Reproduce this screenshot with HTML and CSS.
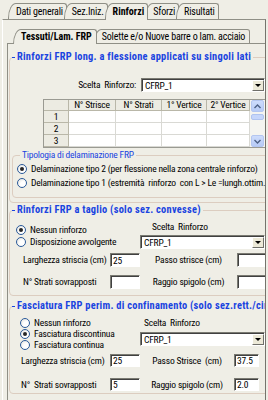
FILE: index.html
```html
<!DOCTYPE html>
<html lang="it">
<head>
  <meta charset="UTF-8">
  <title>Rinforzi</title>
  <link rel="stylesheet" href="styles.css">
</head>
<body>
  <div class="window">
    <div class="tabs outer-tabs">
      <span class="tab">Dati generali</span>
      <span class="tab">Sez.Iniz.</span>
      <span class="tab active">Rinforzi</span>
      <span class="tab">Sforzi</span>
      <span class="tab">Risultati</span>
    </div>

    <div class="outer-page">
      <div class="tabs inner-tabs">
        <span class="tab active">Tessuti/Lam. FRP</span>
        <span class="tab">Solette e/o Nuove barre o lam. acciaio</span>
      </div>

      <div class="inner-page">
        <!-- flessione -->
        <fieldset class="group group-long">
          <legend>Rinforzi FRP long. a flessione applicati su singoli lati</legend>
          <div class="choice-row">
            <span class="choice-label">Scelta&nbsp; Rinforzo:</span>
            <div class="combo combo-long"><span>CFRP_1</span><b class="drop"></b></div>
          </div>

          <div class="grid-wrap">
            <table class="grid">
              <colgroup>
                <col style="width:25px"><col style="width:47px"><col style="width:46px"><col style="width:45px"><col style="width:43px">
              </colgroup>
              <tr><th></th><th>N° Strisce</th><th>N° Strati</th><th>1° Vertice</th><th>2° Vertice</th></tr>
              <tr><th>1</th><td></td><td></td><td></td><td></td></tr>
              <tr><th>2</th><td></td><td></td><td></td><td></td></tr>
              <tr><th>3</th><td></td><td></td><td></td><td></td></tr>
            </table>
            <div class="vscroll">
              <span class="sb-btn"><svg width="7" height="5" viewBox="0 0 7 5"><path d="M0.5 4 L3.5 1 L6.5 4" fill="none" stroke="#4d6185" stroke-width="1.4"/></svg></span>
              <span class="sb-track"><span class="sb-thumb"></span></span>
              <span class="sb-btn"><svg width="7" height="5" viewBox="0 0 7 5"><path d="M0.5 1 L3.5 4 L6.5 1" fill="none" stroke="#4d6185" stroke-width="1.4"/></svg></span>
            </div>
          </div>

          <fieldset class="subgroup">
            <legend>Tipologia di delaminazione FRP</legend>
            <label class="radio"><span class="dot on"></span>Delaminazione tipo 2 (per flessione nella zona centrale rinforzo)</label>
            <label class="radio"><span class="dot"></span>Delaminazione tipo 1 (estremità&nbsp; rinforzo&nbsp; con L &gt; Le =lungh.ottim.</label>
          </fieldset>
        </fieldset>

        <!-- taglio -->
        <fieldset class="group group-shear">
          <legend>Rinforzi FRP a taglio (solo sez. convesse)</legend>
          <div class="top-part">
            <div class="radio-col">
              <label class="radio"><span class="dot on"></span>Nessun rinforzo</label>
              <label class="radio"><span class="dot"></span>Disposizione avvolgente</label>
            </div>
            <div class="choice-col">
              <span class="choice-title">Scelta&nbsp; Rinforzo</span>
              <div class="combo"><span>CFRP_1</span><b class="drop"></b></div>
            </div>
          </div>
          <div class="params">
            <span class="p-label">Larghezza striscia (cm)</span>
            <input class="field" value="25">
            <span class="p-label-mid">Passo strisce (cm)</span>
            <input class="field" value="">
            <span class="p-label">N° Strati sovrapposti</span>
            <input class="field" value="">
            <span class="p-label-mid">Raggio spigolo (cm)</span>
            <input class="field" value="">
          </div>
        </fieldset>

        <!-- confinamento -->
        <fieldset class="group group-wrap">
          <legend>Fasciatura FRP perim. di confinamento (solo sez.rett./circ.)</legend>
          <div class="top-part">
            <div class="radio-col">
              <label class="radio"><span class="dot"></span>Nessun rinforzo</label>
              <label class="radio"><span class="dot on"></span>Fasciatura discontinua</label>
              <label class="radio"><span class="dot"></span>Fasciatura continua</label>
            </div>
            <div class="choice-col">
              <span class="choice-title">Scelta&nbsp; Rinforzo</span>
              <div class="combo"><span>CFRP_1</span><b class="drop"></b></div>
            </div>
          </div>
          <div class="params">
            <span class="p-label">Larghezza striscia (cm)</span>
            <input class="field" value="25">
            <span class="p-label-mid">Passo Strisce&nbsp; (cm)</span>
            <input class="field" value="37.5">
            <span class="p-label">N°&nbsp; Strati sovrapposti</span>
            <input class="field" value="5">
            <span class="p-label-mid">Raggio spigolo (cm)</span>
            <input class="field" value="2.0">
          </div>
        </fieldset>
      </div>
    </div>
  </div>
</body>
</html>
```

FILE: styles.css
```css
* {
  box-sizing: border-box;
}

body {
  margin: 0;
  background: #efeee6;
  color: #000;
  font: 9.5px/12px "Roboto Condensed", "Liberation Sans", sans-serif;
  letter-spacing: -.2px;
}

.window {
  width: 268px;
  height: 400px;
  overflow: hidden;
  padding-left: 2px;
}

/* tabs */
.tabs {
  display: flex;
  align-items: flex-end;
}

.outer-tabs {
  height: 19px;
  padding-left: 6px;
}

.inner-tabs {
  height: 14px;
  padding-left: 6px;
}

.tab {
  position: relative;
  height: 16px;
  padding: 0 4px 0 7px;
  margin-right: -3px;
  border: 1px solid #8f8f86;
  border-bottom: 0;
  border-radius: 8px 3px 0 0 / 15px 3px 0 0;
  background: #efeee6;
  font-size: 10px;
  line-height: 15px;
  white-space: nowrap;
}

.outer-tabs .tab {
  padding-right: 3px;
}

.inner-tabs .tab {
  height: 14px;
  line-height: 13px;
}

.tab.active {
  z-index: 1;
  height: 17px;
  margin-bottom: -1px;
  font-weight: bold;
  letter-spacing: 0;
}

.inner-tabs .tab.active {
  height: 15px;
}

/* pages */
.outer-page {
  width: 264px;
  height: 381px;
  padding: 9px 0 0 4px;
  border-top: 1px solid #8f8f86;
  border-left: 1px solid #fff;
  border-right: 1px solid #74746c;
  overflow: hidden;
}

.inner-page {
  width: 320px;
  height: 400px;
  padding-top: 7px;
  border-top: 1px solid #8f8f86;
  border-left: 1px solid #8f8f86;
}

/* group boxes */
.group {
  width: 300px;
  min-width: 0;
  margin: 0 0 0 1px;
  padding: 0;
  border: 1px solid #dccdc0;
  border-radius: 4px;
}

.group > legend {
  margin-left: 2px;
  padding: 0 2px 0 0;
  color: #1a44e0;
  font-size: 10.4px;
  font-weight: bold;
  letter-spacing: .25px;
  white-space: nowrap;
}

.group > legend::before {
  content: "";
  display: inline-block;
  width: 3px;
  margin-right: 2px;
  vertical-align: middle;
  border-top: 1px solid #1a44e0;
}

.group-long {
  padding-bottom: 4px;
}

.group-shear {
  margin-top: 1px;
  padding-bottom: 6px;
}

.group-wrap {
  margin-top: 4px;
  padding-bottom: 2px;
}

.subgroup {
  width: 290px;
  min-width: 0;
  margin: 1px 0 0 2px;
  padding: 1px 0 7px 4px;
  border: 1px solid #dccdc0;
  border-radius: 4px;
}

.subgroup legend {
  margin-left: 3px;
  padding: 0 2px;
  color: #1a44e0;
  white-space: nowrap;
}

/* combo + fields */
.choice-row {
  display: flex;
  align-items: center;
  margin-top: 15px;
}

.choice-label {
  width: 126px;
  text-align: right;
  white-space: nowrap;
}

.combo {
  display: flex;
  width: 125px;
  height: 14px;
  background: #fff;
  border: 1px solid;
  border-color: #7a7a72 #fff #fff #7a7a72;
  box-shadow: inset 1px 1px 0 #404040;
}

.combo-long {
  width: 124px;
  margin-left: 5px;
}

.combo span {
  flex: 1;
  padding: 1px 0 0 3px;
  line-height: 11px;
}

.drop {
  display: flex;
  align-items: center;
  justify-content: center;
  width: 12px;
  margin: 1px 0 0;
  background: #ece9d8;
  border: 1px solid;
  border-color: #fff #6f6f6a #6f6f6a #fff;
}

.drop::after {
  content: "";
  border-left: 3px solid transparent;
  border-right: 3px solid transparent;
  border-top: 3px solid #000;
}

.field {
  width: 100%;
  height: 14px;
  padding: 0 2px;
  border: 1px solid;
  border-color: #7a7a72 #fff #fff #7a7a72;
  box-shadow: inset 1px 1px 0 #404040;
  background: #fff;
  color: #000;
  font: inherit;
  letter-spacing: inherit;
  outline: none;
}

/* grid */
.grid-wrap {
  display: flex;
  margin: 7px 0 0 33px;
  width: 223px;
  border: 1px solid #9a9a92;
  border-right: 0;
}

.grid {
  width: 206px;
  table-layout: fixed;
  border-spacing: 0;
  background: #fff;
}

.grid th,
.grid td {
  height: 12px;
  padding: 0;
  border-right: 1px solid #d9d9d4;
  border-bottom: 1px solid #d9d9d4;
  font-weight: normal;
  line-height: 10px;
  text-align: center;
  white-space: nowrap;
}

.grid tr:first-child th {
  height: 11px;
}

.grid th {
  background: #ecebe2;
  border-right-color: #b9b7a8;
  border-bottom-color: #b9b7a8;
}

.vscroll {
  display: flex;
  flex-direction: column;
  width: 15px;
  background: #f4f4f0;
}

.sb-btn {
  display: flex;
  align-items: center;
  justify-content: center;
  height: 12px;
  margin: 0 1px;
  background: linear-gradient(#cddcfc, #b7cbf6);
  border: 1px solid #b4c6f0;
  border-radius: 2px;
}

.sb-track {
  flex: 1;
}

.sb-thumb {
  display: block;
  height: 6px;
  margin: 2px 1px 0;
  background: #c6d6fb;
  border: 1px solid #b0c4ef;
  border-radius: 2px;
}

/* radios */
.radio {
  display: flex;
  align-items: center;
  gap: 4px;
  height: 14px;
  white-space: nowrap;
}

.dot {
  display: flex;
  align-items: center;
  justify-content: center;
  flex: none;
  width: 10px;
  height: 10px;
  border: 1px solid #2a5a9a;
  border-radius: 50%;
  background: radial-gradient(circle at 65% 65%, #fff 35%, #dcdcd6);
}

.dot.on::after {
  content: "";
  width: 4px;
  height: 4px;
  border-radius: 50%;
  background: #262626;
}

/* shear / wrap sections */
.top-part {
  display: flex;
}

.radio-col {
  width: 130px;
}

.group-shear .radio-col {
  padding: 8px 0 0 6px;
}

.group-shear .radio {
  height: 12px;
}

.group-wrap .radio-col {
  padding: 5px 0 0 10px;
}

.group-wrap .radio {
  height: 11px;
  line-height: 11px;
}

.choice-col {
  display: flex;
  flex-direction: column;
  padding-top: 5px;
}

.choice-title {
  height: 12px;
  white-space: nowrap;
}

.group-shear .choice-title {
  margin-left: 12px;
}

.group-shear .combo {
  margin-top: 2px;
}

.group-wrap .choice-title {
  margin-left: 4px;
}

.group-wrap .combo {
  margin-top: 3px;
}

.params {
  display: grid;
  align-items: center;
  margin-top: 4px;
}

.group-shear .params {
  grid-template-columns: 100px 30px 97px 60px;
  row-gap: 8px;
}

.group-wrap .params {
  grid-template-columns: 100px 30px 94px 25px;
  row-gap: 11px;
}

.group-wrap .field {
  height: 13px;
}

.p-label {
  padding-left: 13px;
  white-space: nowrap;
}

.group-wrap .p-label {
  padding-left: 11px;
}

.p-label-mid {
  text-align: center;
  white-space: nowrap;
}
```
